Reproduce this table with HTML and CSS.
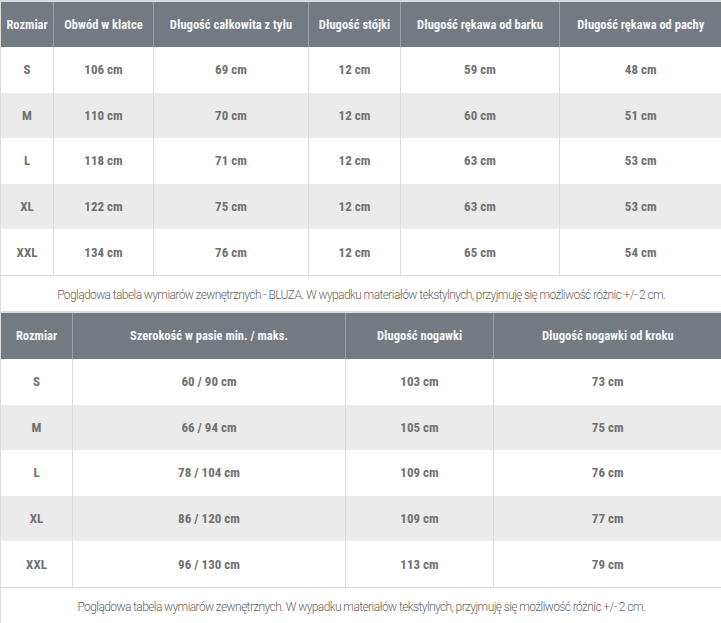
FILE: index.html
```html
<!DOCTYPE html>
<html lang="pl">
<head>
<meta charset="utf-8">
<title>Tabela rozmiarów</title>
<link rel="stylesheet" href="styles.css">
</head>
<body>
<table class="size-table t1">
  <colgroup>
    <col class="c1-1"><col class="c1-2"><col class="c1-3"><col class="c1-4"><col class="c1-5"><col class="c1-6">
  </colgroup>
  <thead>
    <tr class="head">
      <th>Rozmiar</th><th>Obwód w klatce</th><th>Długość całkowita z tyłu</th><th>Długość stójki</th><th>Długość rękawa od barku</th><th>Długość rękawa od pachy</th>
    </tr>
  </thead>
  <tbody>
    <tr class="row"><td>S</td><td>106 cm</td><td>69 cm</td><td>12 cm</td><td>59 cm</td><td>48 cm</td></tr>
    <tr class="row alt"><td>M</td><td>110 cm</td><td>70 cm</td><td>12 cm</td><td>60 cm</td><td>51 cm</td></tr>
    <tr class="row"><td>L</td><td>118 cm</td><td>71 cm</td><td>12 cm</td><td>63 cm</td><td>53 cm</td></tr>
    <tr class="row alt"><td>XL</td><td>122 cm</td><td>75 cm</td><td>12 cm</td><td>63 cm</td><td>53 cm</td></tr>
    <tr class="row"><td>XXL</td><td>134 cm</td><td>76 cm</td><td>12 cm</td><td>65 cm</td><td>54 cm</td></tr>
    <tr class="note"><td colspan="6">Poglądowa tabela wymiarów zewnętrznych - BLUZA. W wypadku materiałów tekstylnych, przyjmuję się możliwość różnic +/- 2 cm.</td></tr>
  </tbody>
</table>
<table class="size-table t2">
  <colgroup>
    <col class="c2-1"><col class="c2-2"><col class="c2-3"><col class="c2-4">
  </colgroup>
  <thead>
    <tr class="head">
      <th>Rozmiar</th><th>Szerokość w pasie min. / maks.</th><th>Długość nogawki</th><th>Długość nogawki od kroku</th>
    </tr>
  </thead>
  <tbody>
    <tr class="row"><td>S</td><td>60 / 90 cm</td><td>103 cm</td><td>73 cm</td></tr>
    <tr class="row alt"><td>M</td><td>66 / 94 cm</td><td>105 cm</td><td>75 cm</td></tr>
    <tr class="row"><td>L</td><td>78 / 104 cm</td><td>109 cm</td><td>76 cm</td></tr>
    <tr class="row alt"><td>XL</td><td>86 / 120 cm</td><td>109 cm</td><td>77 cm</td></tr>
    <tr class="row"><td>XXL</td><td>96 / 130 cm</td><td>113 cm</td><td>79 cm</td></tr>
    <tr class="note"><td colspan="4">Poglądowa tabela wymiarów zewnętrznych. W wypadku materiałów tekstylnych, przyjmuję się możliwość różnic +/- 2 cm.</td></tr>
  </tbody>
</table>
</body>
</html>
```
FILE: styles.css
```css
html, body {
  margin: 0;
  padding: 0;
  background: #ffffff;
}
.size-table {
  width: 721px;
  table-layout: fixed;
  border-collapse: collapse;
  border-top: 2px solid #dcdcdc;
  font-family: "Liberation Sans Narrow", "Roboto Condensed", Roboto, sans-serif;
}
.c1-1 { width: 53px; }
.c1-2 { width: 100px; }
.c1-3 { width: 155px; }
.c1-4 { width: 92px; }
.c1-5 { width: 159px; }
.c1-6 { width: 162px; }
.c2-1 { width: 72px; }
.c2-2 { width: 273px; }
.c2-3 { width: 148px; }
.c2-4 { width: 228px; }
.head th {
  height: 44px;
  padding: 0 0 1px;
  background: #737a82;
  color: #f6f6f6;
  font-size: 12.5px;
  font-weight: 700;
  text-align: center;
  vertical-align: middle;
  border-left: 1px solid #9aa0a6;
}
.head th:first-child { border-left: 1px solid #dcdcdc; }
.t2 .head th { height: 45px; }
.row td {
  height: 45.6px;
  padding: 0;
  text-align: center;
  vertical-align: middle;
  color: #707070;
  font-size: 13px;
  font-weight: 700;
  border-left: 1px solid #dcdcdc;
  background: #ffffff;
}
.row.alt td { background: #ebebeb; }
.note td {
  height: 31px;
  padding: 4px 0 0;
  text-align: center;
  vertical-align: middle;
  border-top: 1px solid #dcdcdc;
  border-left: 1px solid #dcdcdc;
  font-family: Roboto, "Liberation Sans", sans-serif;
  font-size: 12px;
  font-weight: 300;
  letter-spacing: -0.6px;
  color: #666666;
}
```
